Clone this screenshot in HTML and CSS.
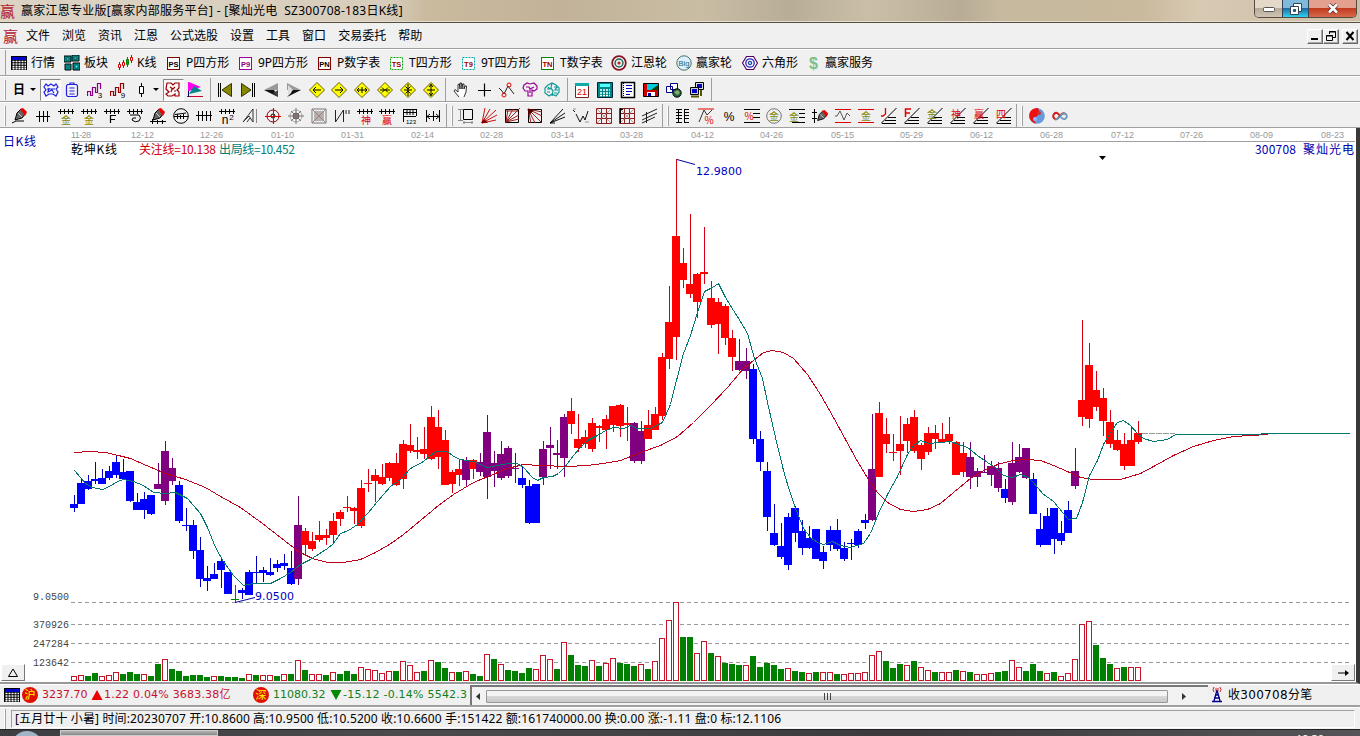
FILE: index.html
```html
<!DOCTYPE html>
<html lang="zh-CN">
<head>
  <meta charset="UTF-8" />
  <title>赢家江恩专业版</title>
  <link rel="stylesheet" href="styles.css">
</head>
<body>
  <!-- shared icon parts -->
  <svg class="defs">
    <symbol id="comb" viewBox="0 0 16 16"><path d="M0 3.5H16M2.5 1V6M6.5 1V6M10.5 1V6M14.5 1V6" stroke="#000" fill="none"/></symbol>
    <symbol id="fan" viewBox="0 0 16 16"><path d="M0 15.5L15.500 0M1 15.500H15M4 12.500H15M7 9.500H15" stroke="#000" fill="none"/></symbol>
    <symbol id="diamond" viewBox="0 0 16 16"><path d="M8 .5L15.500 8L8 15.500L.5 8Z" fill="#ff0" stroke="#665c00"/></symbol>
    <symbol id="grid" viewBox="0 0 16 16"><path d="M.5 .5H15.500V15.500H.5ZM.5 5.500H15.500M.5 10.500H15.500M5.500 .5V15.500M10.500 .5V15.500" fill="none" stroke="#822"/><path d="M1 15L15 1M1 1L15 15" stroke="#a77" stroke-width=".7"/></symbol>
    <symbol id="sheet" viewBox="0 0 16 14"><path d="M0 0H16V14H0Z" fill="#000"/><path d="M1 1H15V4H1Z" fill="#00c"/><path d="M1.500 5.500H15M1.500 8H15M1.500 10.500H15M1.500 12.700H15" stroke="#fff" stroke-width="1.700" stroke-dasharray="2 1"/></symbol>
    <symbol id="pencil" viewBox="0 0 16 16"><path d="M3 12L5 5L9 1L14 5L10 10Z" fill="#666" stroke="#000"/><path d="M8 1L11 0L15 4L13 8Z" fill="#e00"/><path d="M6 5L10 9" stroke="#ccc"/></symbol>
    <symbol id="wave" viewBox="0 0 16 16"><path d="M.5 14V9.500H3.500V13.500H5.500V5.500H8.500V10.500H10.500V1.500H13.500V7" fill="none" stroke-width="1.200"/></symbol>
  </svg>

  <header class="title-bar">
    <span class="logo">赢</span>
    <span class="title-text">赢家江恩专业版[赢家内部服务平台] - [聚灿光电&nbsp; SZ300708-183日K线]</span>
    <div class="window-buttons">
      <span class="win-min"><svg width="12" height="6"><rect x=".5" y=".5" width="11" height="4" rx="1" fill="#fff" stroke="#555"/></svg></span>
      <span class="win-max"><svg width="12" height="12"><path d="M3.500 .5H11.500V8.500H3.500Z" fill="#fff" stroke="#345"/><path d="M.5 3.500H8.500V11.500H.5Z" fill="#fff" stroke="#345"/><path d="M3.500 6.500H5.500V8.500H3.500Z" fill="#27a" stroke="#345"/></svg></span>
      <span class="win-close"><svg width="12" height="11"><path d="M2 1.500L10 9.500M10 1.500L2 9.500" stroke="#533" stroke-width="4"/><path d="M2 1.500L10 9.500M10 1.500L2 9.500" stroke="#fff" stroke-width="2.500"/></svg></span>
    </div>
  </header>

  <nav class="menu-bar">
    <span class="logo">赢</span>
    <div class="menu">
      <span>文件</span><span>浏览</span><span>资讯</span><span>江恩</span><span>公式选股</span><span>设置</span><span>工具</span><span>窗口</span><span>交易委托</span><span>帮助</span>
    </div>
    <div class="mdi-buttons">
      <span><svg width="12" height="10"><path d="M2 8H9" stroke="#000" stroke-width="2"/></svg></span>
      <span><svg width="12" height="10"><path d="M4.500 3V.5H10.500V6.500H8M4 1H11M1.500 4.500H7.500V9.500H1.500ZM1 5H8" fill="none" stroke="#000"/></svg></span>
      <span class="mdi-close"><svg width="12" height="10"><path d="M2.500 1L9.500 9M9.500 1L2.500 9" stroke="#000" stroke-width="2"/></svg></span>
    </div>
  </nav>

  <div class="toolbar named-tools">
    <div class="tool"><svg class="w16" height="14"><use href="#sheet" width="16" height="14"/></svg>行情</div>
    <div class="tool"><svg class="w16" viewBox="0 0 16 16"><path d="M0 1H7V7H0ZM8 0H15V6H8ZM1 9H7V15H1ZM9 8H16V15H9Z" fill="#099" stroke="#000"/><path d="M2 3H5V5H2ZM10 2H13V4H10ZM3 11H5V13H3ZM11 10H14V13H11Z" fill="#5ff" stroke="#055"/></svg>板块</div>
    <div class="tool"><svg class="w16" viewBox="0 0 16 16"><path d="M2.500 7V15M6.500 5V13M14.500 0V8" stroke="#d00"/><path d="M10.500 2V12" stroke="#080"/><path d="M1.500 9.500H3.500V12.500H1.500ZM5.500 7.500H7.500V10.500H5.500ZM13.500 2.500H15.500V5.500H13.500Z" fill="#fff" stroke="#d00"/><path d="M9.500 4.500H11.500V9.500H9.500Z" fill="#0a0" stroke="#080"/></svg>K线</div>
    <div class="tool"><svg class="w13" viewBox="0 0 13 13"><rect x=".5" y=".5" width="12" height="12" fill="#fff" stroke="#800000"/><text x="6.500" y="9.500">PS</text></svg>P四方形</div>
    <div class="tool"><svg class="w13 violet" viewBox="0 0 13 13"><rect x=".5" y=".5" width="12" height="12" fill="#fff" stroke="#a000a0"/><text x="6.500" y="9.500">P9</text></svg>9P四方形</div>
    <div class="tool"><svg class="w13" viewBox="0 0 13 13"><rect x=".5" y=".5" width="12" height="12" fill="#fff" stroke="#800000"/><text x="6.500" y="9.500">PN</text></svg>P数字表</div>
    <div class="tool"><svg class="w13 maroon" viewBox="0 0 13 13"><rect x=".5" y=".5" width="12" height="12" fill="#fff" stroke="#0a0" stroke-dasharray="2 1"/><text x="6.500" y="9.500">TS</text></svg>T四方形</div>
    <div class="tool"><svg class="w13 maroon" viewBox="0 0 13 13"><rect x=".5" y=".5" width="12" height="12" fill="#fff" stroke="#0aa" stroke-dasharray="2 1"/><text x="6.500" y="9.500">T9</text></svg>9T四方形</div>
    <div class="tool"><svg class="w13 maroon" viewBox="0 0 13 13"><rect x=".5" y=".5" width="12" height="12" fill="#fff" stroke="#080"/><text x="6.500" y="9.500">TN</text></svg>T数字表</div>
    <div class="tool"><svg class="w16" viewBox="0 0 16 16"><circle cx="8" cy="8" r="6.800" fill="#fff" stroke="#812" stroke-width="1.800"/><circle cx="8" cy="8" r="4" fill="#dee" stroke="#265" stroke-width="1.500"/><circle cx="8" cy="8" r="1.600" fill="#c22"/></svg>江恩轮</div>
    <div class="tool"><svg class="w16 big" viewBox="0 0 16 16"><circle cx="8" cy="8" r="7.200" fill="#def" stroke="#476"/><text x="8" y="11" textLength="11" lengthAdjust="spacingAndGlyphs">Big</text></svg>赢家轮</div>
    <div class="tool"><svg class="w16" viewBox="0 0 16 16"><path d="M4.500 1.500H11.500L15.500 8L11.500 14.500H4.500L.5 8Z" fill="#fff" stroke="#505" stroke-width="1.200"/><circle cx="8" cy="8" r="4.200" fill="#fff" stroke="#22c" stroke-width="1.300"/><circle cx="8" cy="8" r="1.800" fill="#9cf" stroke="#137"/></svg>六角形</div>
    <div class="tool"><svg class="w13 dollar" viewBox="0 0 13 18"><text x="6.500" y="14.500">$</text></svg>赢家服务</div>
  </div>

  <div class="toolbar view-tools">
    <i class="grip"></i>
    <span class="day">日<svg width="7" height="4"><path d="M1 0H7L4 3Z"/></svg></span>
    <span class="btn on"><svg viewBox="0 0 16 16" fill="none" stroke="#22d" stroke-width="1.200"><path d="M1 5L3 2L5 4L8 2L11 4L13 2L15 5L13 7L15 10L13 14L10 12H6L3 14L1 10L3 8Z"/><path d="M4 7H12M6 6L5 10L9 8L11 11"/></svg></span>
    <span class="btn"><svg viewBox="0 0 16 16" fill="none" stroke="#22d" stroke-width="1.200"><path d="M3.500 2.500H12.500L13.500 4V13L12.500 14.500H3.500L2.500 13V4ZM6 2V1H10V3M5.500 6H10.500M5.500 9H10.500M5.500 12H10.500"/></svg></span>
    <span class="btn"><svg viewBox="0 0 16 16" stroke="#808"><use href="#wave"/><text x="13" y="16" class="sub">3</text></svg></span>
    <span class="btn"><svg viewBox="0 0 16 16" stroke="#900"><use href="#wave"/><text x="13" y="16" class="sub">9</text></svg></span>
    <span class="day candle"><svg width="6" height="14"><path d="M3.500 0V14" stroke="#000"/><path d="M1.500 3.500H5.500V10.500H1.500Z" fill="#fff" stroke="#000"/></svg><svg width="7" height="4"><path d="M1 0H7L4 3Z"/></svg></span>
    <span class="btn on"><svg viewBox="0 0 16 16" fill="none" stroke="#900" stroke-width="1.200"><path d="M2 1H6L8 3L10 1H14V6L12 8L14 10V14H10V12L7 14H3L1 12L4 10L1 7Z"/><path d="M5 5L8 7L10 5M7 7L6 10M9 9L11 9"/></svg></span>
    <span class="btn"><svg viewBox="0 0 16 16"><path d="M2 0L14 5L2 9Z" fill="#f0e"/><path d="M2 12L7 4L15 9Z" fill="#088"/><path d="M1.500 0V15" stroke="#f0e"/><path d="M0 14.500H16" stroke="#c03"/><path d="M1.500 9V15" stroke="#006"/></svg></span>
    <i class="sep"></i>
    <span class="btn"><svg viewBox="0 0 16 16"><path d="M1.500 1V15M3.500 1V15" stroke="#000"/><path d="M14.500 1.500V14.500L5 8Z" fill="#880" stroke="#330"/></svg></span>
    <span class="btn"><svg viewBox="0 0 16 16"><path d="M14.500 1V15M12.500 1V15" stroke="#000"/><path d="M1.500 1.500V14.500L11 8Z" fill="#880" stroke="#330"/></svg></span>
    <span class="btn"><svg viewBox="0 0 16 16"><path d="M15 1V8H1Z" fill="#999"/><path d="M15 15L11 8H1Z" fill="#111"/><path d="M15 8V15L10 11Z" fill="#444"/></svg></span>
    <span class="btn"><svg viewBox="0 0 16 16"><path d="M1 1L15 8H1Z" fill="#999"/><path d="M1 15L5 11L6 8H15Z" fill="#111"/><path d="M2 3L7 8L2 13Z" fill="#ddd"/></svg></span>
    <span class="btn"><svg viewBox="0 0 16 16"><use href="#diamond"/><path d="M4 8H12M7 5L4 8L7 11" fill="none" stroke="#000"/></svg></span>
    <span class="btn"><svg viewBox="0 0 16 16"><use href="#diamond"/><path d="M4 8H12M9 5L12 8L9 11" fill="none" stroke="#000"/></svg></span>
    <span class="btn"><svg viewBox="0 0 16 16"><use href="#diamond"/><path d="M3 8H13M5 6L3 8L5 10M11 6L13 8L11 10M8 5V11" fill="none" stroke="#000"/></svg></span>
    <span class="btn"><svg viewBox="0 0 16 16"><use href="#diamond"/><path d="M3 8H13M5 5.500L7.500 8L5 10.500M11 5.500L8.500 8L11 10.500" fill="none" stroke="#000"/></svg></span>
    <span class="btn"><svg viewBox="0 0 16 16"><use href="#diamond"/><path d="M8 2V14M4 8H12M5.500 4.500L8 7L10.500 4.500M5.500 11.500L8 9L10.500 11.500" fill="none" stroke="#000"/></svg></span>
    <span class="btn"><svg viewBox="0 0 16 16"><use href="#diamond"/><path d="M8 2V14M4 8H12M6 5L8 2.500L10 5M6 11L8 13.500L10 11" fill="none" stroke="#000"/></svg></span>
    <i class="sep"></i>
    <span class="btn"><svg viewBox="0 0 16 16"><path d="M6 15L1 9L2 7.500L5 10V2.500L6.500 2L7 7V1L8.500 1L9 7L9.500 2H11V7L12 4H13.500L13 10L11 15" fill="#fff" stroke="#000" stroke-width=".8"/></svg></span>
    <span class="btn"><svg viewBox="0 0 16 16"><path d="M8.500 1.500V14.500M2 8.500H15" stroke="#000" stroke-width="1.200"/></svg></span>
    <span class="btn"><svg viewBox="0 0 16 16" fill="none"><path d="M0 6L3 9L5 12L9 4L15 12" stroke="#222"/><circle cx="5" cy="13" r="2" stroke="#d00"/><circle cx="10" cy="3" r="2" stroke="#d00"/></svg></span>
    <span class="btn"><svg viewBox="0 0 16 16" fill="none" stroke="#909" stroke-width="1.200"><path d="M2 3L5 1L8 2L12 1L15 4V7L12 9L10 8V14H6V9L3 9L1 6Z"/><path d="M4 5H7L8 7L12 5M8 7V11"/></svg></span>
    <span class="btn"><svg viewBox="0 0 16 16" fill="none" stroke="#199" stroke-width="1.200"><path d="M4 3L8 1L12 3L15 6V10L12 14L8 12L5 14L1 11V6ZM8 1L7 6L9 9L8 14M4 5L6 7H3M10 5H13L11 8H14M3 10H6M10 11H13"/></svg></span>
    <i class="sep"></i>
    <span class="btn"><svg viewBox="0 0 16 16"><path d="M1.500 1.500H14.500V15.500H1.500Z" fill="#fff" stroke="#722"/><path d="M1 1H15V4H1Z" fill="#1aa"/><text x="8" y="13" class="cal">21</text></svg></span>
    <span class="btn"><svg viewBox="0 0 16 16"><path d="M.5 .5H15.500V15.500H.5Z" fill="#088" stroke="#023"/><path d="M3 2H13V5H3Z" fill="#5ff"/><path d="M3 8H13M3 11H13M3 13.500H13" stroke="#fff" stroke-width="1.600" stroke-dasharray="2 1"/></svg></span>
    <span class="btn"><svg viewBox="0 0 16 16"><path d="M1.500 .5H14.500V15.500H1.500Z" fill="#fff" stroke="#000" stroke-width="1.500"/><path d="M3.500 1V15" stroke="#000" stroke-dasharray="1 1"/><path d="M6 3.500H12M6 6.500H12M6 9.500H12M6 12.500H10" stroke="#00a"/></svg></span>
    <span class="btn"><svg viewBox="0 0 16 16"><path d="M.5 1.500H15.500V14.500H.5Z" fill="#c00" stroke="#000"/><path d="M4 2H15V8H4Z" fill="#0cd"/><path d="M8 8L15 3V8Z" fill="#040"/><path d="M4 10H12V14H4Z" fill="#fff"/><path d="M5 11H8V14H5Z" fill="#00a"/></svg></span>
    <span class="btn"><svg viewBox="0 0 16 16"><path d="M4.500 1.500H11.500V7.500H4.500ZM.5 4.500H6.500V10.500H.5Z" fill="#fff" stroke="#008"/><circle cx="11" cy="11" r="4.200" fill="#264" stroke="#000"/><path d="M8 10L12 8L14 11L11 13Z" fill="#8a6"/></svg></span>
    <span class="btn"><svg viewBox="0 0 16 16"><path d="M6.500 .5H14.500V7.500H6.500Z" fill="#ddd" stroke="#000"/><path d="M8 2H13V6H8Z" fill="#00b"/><path d="M1.500 5.500H9.500V12.500H1.500Z" fill="#ccc" stroke="#000"/><path d="M3 7H8V11H3Z" fill="#00c"/><path d="M2 14.500H10M12 8V14" stroke="#550" stroke-width="2"/></svg></span>
    <i class="sep"></i>
  </div>

  <div class="toolbar draw-tools">
    <i class="grip"></i>
    <span class="btn"><svg viewBox="0 0 16 16"><use href="#pencil"/><path d="M0 15L4 13H12" fill="none" stroke="#000"/></svg></span>
    <span class="btn"><svg viewBox="0 0 16 16"><path d="M1 8.500H15M4.500 3V14M8.500 3V14M12.500 3V14" stroke="#000"/></svg></span>
    <span class="btn"><svg viewBox="0 0 16 16"><use href="#comb"/><text x="8" y="15.500" class="gold">金</text></svg></span>
    <span class="btn"><svg viewBox="0 0 16 16"><use href="#comb"/><text x="8" y="15.500" class="gold">金</text></svg></span>
    <span class="btn"><svg viewBox="0 0 16 16"><use href="#comb"/><path d="M6.500 15V7.500H12M6.500 11.500H11" fill="none" stroke="#000" stroke-width="1.200"/></svg></span>
    <span class="btn"><svg viewBox="0 0 16 16"><use href="#comb"/><path d="M3 7H12Q15 10 12 13Q8 15 5 12Q5 9 9 10" fill="none" stroke="#000"/></svg></span>
    <span class="btn"><svg viewBox="0 0 16 16"><use href="#pencil"/><path d="M0 13.500H16M2.500 11V16M7.500 12V16M12.500 12V16" stroke="#000"/></svg></span>
    <span class="btn"><svg viewBox="0 0 16 16"><circle cx="8" cy="8" r="7.300" fill="none" stroke="#000"/><path d="M1 8.500H15M4.500 6V11M7.500 7V11M10.500 6V11M2 6.500L13 5" stroke="#000"/></svg></span>
    <span class="btn"><svg viewBox="0 0 16 16"><path d="M0 7.500H16M2.500 3V13M6.500 3V13M10.500 3V13M14.500 3V13" stroke="#000"/></svg></span>
    <span class="btn"><svg viewBox="0 0 16 16"><use href="#comb"/><text x="6" y="15.500" class="ink">n</text><text x="12.500" y="12" class="sub">2</text></svg></span>
    <span class="btn"><svg viewBox="0 0 16 16"><path d="M1 14L11 1V14L7 8L1 14M5 14L8 10" fill="none" stroke="#333"/><path d="M14.500 1V15" stroke="#888"/></svg></span>
    <span class="btn"><svg viewBox="0 0 16 16"><circle cx="8" cy="8" r="6" fill="none" stroke="#800"/><circle cx="8" cy="8" r="2" fill="none" stroke="#000"/><path d="M8.500 0V16M0 8.500H16" stroke="#d00"/></svg></span>
    <span class="btn"><svg viewBox="0 0 16 16"><circle cx="8" cy="8" r="6" fill="none" stroke="#aaa"/><circle cx="8" cy="8" r="3" fill="#a55" stroke="#666"/><path d="M8 0V16M0 8H16M3 3L13 13M13 3L3 13" stroke="#777"/></svg></span>
    <span class="btn"><svg viewBox="0 0 16 16"><path d="M1 1H15V15H1ZM4 4H12V12H4ZM6 6H10V10H6Z" fill="none" stroke="#777"/><path d="M1 1L15 15M15 1L1 15" stroke="#a77"/></svg></span>
    <span class="btn"><svg viewBox="0 0 16 16"><path d="M1.500 2V14L9.500 2V14M12 2V6M15 2V6" fill="none" stroke="#222"/></svg></span>
    <span class="btn"><svg viewBox="0 0 16 16"><use href="#comb"/><text x="9" y="15.500" class="crimson">神</text></svg></span>
    <span class="btn"><svg viewBox="0 0 16 16"><use href="#comb"/><text x="8" y="15.500" class="crimson">赢</text></svg></span>
    <span class="btn"><svg viewBox="0 0 16 16"><path d="M1.500 1V14M1 1.500H15M14.500 1V8M1 4.500H14M5 1V7M8 1V7M11 1V7M1 8.500H14" stroke="#000"/><text x="9" y="15.500" class="tiny">123</text></svg></span>
    <span class="btn"><svg viewBox="0 0 16 16"><path d="M1.500 2V14M14.500 2V14M8.500 3V13M2 8.500H14M5 6L2 8.500L5 11M11 6L14 8.500L11 11" fill="none" stroke="#000"/></svg></span>
    <i class="sep"></i><i class="grip"></i>
    <span class="btn"><svg viewBox="0 0 16 16"><path d="M5.500 1.500H14.500V11.500H5.500Z" fill="none" stroke="#000"/><path d="M2.500 1V13M0 1.500H5M0 12.500H5M5 14.500H15M6 13V16M14 13V16" stroke="#888"/></svg></span>
    <span class="btn"><svg viewBox="0 0 16 16"><path d="M1 15L4 0M1 15L9 1M1 15L15 2M1 15L16 7M1 15L15 12" stroke="#c11"/><path d="M0 15H7L3 11Z" fill="#700"/></svg></span>
    <span class="btn"><svg viewBox="0 0 16 16"><path d="M1.500 1.500H14.500V14.500H1.500Z" fill="none" stroke="#000"/><path d="M2 14L4 1M2 14L9 1M2 14L16 0M2 14L15 7M2 14L15 11M2 3L14 3" stroke="#922"/></svg></span>
    <span class="btn"><svg viewBox="0 0 16 16"><path d="M1.500 1.500H14.500V14.500H1.500Z" fill="none" stroke="#000"/><path d="M1 1L15 4M1 1L15 8M1 1L15 15M1 1L8 15M1 1L4 15" stroke="#922"/><path d="M1 1H8L1 8Z" fill="#500"/></svg></span>
    <span class="btn"><svg viewBox="0 0 16 16"><path d="M0 15L13 1M0 15L15 5M0 15L15 9M0 15H5" stroke="#111"/></svg></span>
    <span class="btn"><svg viewBox="0 0 16 16"><path d="M0 2L2 4M3 6L7 14L10 8L12 12L15 3" fill="none" stroke="#111"/><path d="M0 1H3M12 14H16" stroke="#999"/></svg></span>
    <span class="btn"><svg viewBox="0 0 16 16"><use href="#grid"/></svg></span>
    <span class="btn"><svg viewBox="0 0 16 16"><use href="#grid"/><path d="M1.500 0V15M1 1.500H4" stroke="#000"/></svg></span>
    <span class="btn"><svg viewBox="0 0 16 16"><path d="M0 8L15 1M0 12L15 5M0 15L13 9M4.500 4V15" stroke="#222"/></svg></span>
    <i class="sep"></i><i class="grip"></i>
    <span class="btn"><svg viewBox="0 0 16 16"><path d="M3.500 1V15M9.500 1V15" stroke="#000"/><path d="M1 1.500H7M1 4.500H7M1 7.500H7M1 10.500H7M1 14.500H7M9 1.500H14M9 4.500H14M9 7.500H14M9 10.500H14M9 14.500H14" stroke="#000"/></svg></span>
    <span class="btn"><svg viewBox="0 0 16 16"><path d="M0 1H16" stroke="#d00"/><path d="M1 14L6 2L9 7L14 2" fill="none" stroke="#333"/><text x="11" y="15.500" class="crimson">%</text></svg></span>
    <span class="btn"><svg viewBox="0 0 16 16"><text x="8" y="13" class="ink">%</text></svg></span>
    <span class="btn"><svg viewBox="0 0 16 16"><path d="M0 1.500H16M9 5.500H16M9 9.500H16M0 14.500H16" stroke="#000"/><text x="5" y="12" class="crimson">%</text></svg></span>
    <span class="btn"><svg viewBox="0 0 16 16"><circle cx="8" cy="8" r="7.300" fill="none" stroke="#777"/><text x="8" y="12" class="gold">金</text></svg></span>
    <span class="btn"><svg viewBox="0 0 16 16"><path d="M0 1.500H16M10 5.500H16M10 9.500H16M3 14.500H16" stroke="#000"/><text x="5" y="13" class="gold">金</text></svg></span>
    <span class="btn"><svg viewBox="0 0 16 16"><use href="#pencil" x="3" y="2" width="14" height="14"/><path d="M2.500 1V15M0 4.500H5M0 10.500H5" stroke="#000"/></svg></span>
    <span class="btn"><svg viewBox="0 0 16 16"><path d="M0 1.500H16M0 14.500H16" stroke="#d00"/><path d="M0 8H2L5 3L9 12L12 5L15 8" fill="none" stroke="#555"/></svg></span>
    <span class="btn"><svg viewBox="0 0 16 16"><path d="M0 1.500H16M0 14.500H16" stroke="#d00"/><text x="8" y="12" class="gold">金</text></svg></span>
    <span class="btn"><svg viewBox="0 0 16 16"><use href="#fan"/><path d="M4.500 0V6L2 8H0" fill="none" stroke="#d00" stroke-width="1.300"/></svg></span>
    <span class="btn"><svg viewBox="0 0 16 16"><use href="#fan"/><path d="M1.500 9V1H7M1.500 5H6" fill="none" stroke="#d00" stroke-width="1.500"/></svg></span>
    <span class="btn"><svg viewBox="0 0 16 16"><use href="#fan"/><text x="5" y="10" class="gold">金</text></svg></span>
    <span class="btn"><svg viewBox="0 0 16 16"><use href="#fan"/><text x="6" y="10" class="crimson">神</text></svg></span>
    <span class="btn"><svg viewBox="0 0 16 16"><use href="#fan"/><text x="6" y="10" class="crimson">赢</text></svg></span>
    <span class="btn"><svg viewBox="0 0 16 16"><use href="#fan"/><text x="5" y="9.500" class="crimson">四</text></svg></span>
    <i class="sep"></i><i class="grip"></i>
    <span class="btn"><svg viewBox="0 0 16 16"><circle cx="8" cy="8" r="7.800" fill="#69d"/><path d="M9 0A7.800 7.800 0 1 0 7 15.500Q3 11 8 8Q12 5 9 0Z" fill="#e11"/><circle cx="10" cy="5" r="2" fill="#c33"/><circle cx="6" cy="11" r="2" fill="#8bf"/></svg></span>
    <span class="btn"><svg viewBox="0 0 16 16"><path d="M8 8Q5 3 2 6Q0 9 3 11Q5 12 8 8Q11 4 13 6" fill="none" stroke="#c22" stroke-width="2"/><path d="M8 8Q11 4 14 6Q16 9 13 11Q11 12 8 8M3 11Q5 12 7 9" fill="none" stroke="#69b" stroke-width="1.800"/></svg></span>
  </div>

  <main class="workspace">
    <svg id="chart" width="1355" height="554" viewBox="0 128 1355 554">
      <g id="dates" class="dates"></g>
      <path class="axis" d="M71 141.500H1355"/>
      <g class="guides"><path d="M71 602.500H1352M71 624.500H1352M71 643.500H1352M71 662.500H1352"/></g>
      <g id="volume"></g>
      <g id="candles"></g>
      <g id="averages" class="averages"></g>
      <path class="last-close" d="M1142 433.500H1175"/>
      <path class="pointer" d="M677 159.500L695 164.500M235 602.500L255 597.500"/>
      <path d="M1099 156H1106L1102.500 160Z"/>
      <text class="song blue" x="3" y="146" textLength="33">日K线</text>
      <text class="song" x="71" y="154" textLength="46">乾坤K线</text>
      <text class="song red" x="139" y="154" textLength="77">关注线=10.138</text>
      <text class="song teal" x="219" y="154" textLength="76">出局线=10.452</text>
      <text class="song blue" x="1255" y="154" textLength="41">300708</text>
      <text class="song blue" x="1303" y="154" textLength="51">聚灿光电</text>
      <text class="mark" x="696" y="175" textLength="46">12.9800</text>
      <text class="mark" x="255" y="600" textLength="39">9.0500</text>
      <g class="scale">
        <text x="33" y="600">9.0500</text>
        <text x="33" y="628">370926</text>
        <text x="33" y="647">247284</text>
        <text x="33" y="666">123642</text>
      </g>
    </svg>
    <span class="corner corner-left"><svg width="12" height="10"><path d="M6 1L10.500 8.500H1.500Z" fill="none" stroke="#000"/></svg></span>
    <span class="corner corner-right"><svg width="12" height="8"><path d="M1 4H9" stroke="#000"/><path d="M8 1L12 4L8 7Z"/></svg></span>
  </main>

  <div class="index-bar">
    <div class="indexes">
      <svg class="w16" height="14"><use href="#sheet" width="16" height="14"/></svg>
      <b class="coin">沪</b>
      <span class="up sh">3237.70</span>
      <svg width="12" height="10"><path d="M6 0L11.500 10H.5Z" fill="#e00"/></svg>
      <span class="up sh2">1.22 0.04% 3683.38亿</span>
      <b class="coin">深</b>
      <span class="down sz">11080.32</span>
      <svg width="12" height="10"><path d="M6 10L11.500 0H.5Z" fill="#080"/></svg>
      <span class="down sz2">-15.12 -0.14% 5542.3</span>
    </div>
    <div class="scroll">
      <svg width="4" height="7"><path d="M4 0V7L0 3.500Z" fill="#333"/></svg>
      <span class="thumb"><i></i><i></i><i></i></span>
      <svg width="4" height="7"><path d="M0 0V7L4 3.500Z" fill="#333"/></svg>
    </div>
    <div class="feed">
      <svg width="12" height="16" viewBox="0 0 12 16"><path d="M6 3L3 14M6 3L9 14M4 8H8M3 11H9M1 14.500H11" stroke="#008" stroke-width="1.300"/><path d="M3 0Q1 3 3 5M9 0Q11 3 9 5M5 1V4M7 1V4" stroke="#c22" fill="none"/></svg>
      <span>收300708分笔</span>
    </div>
  </div>

  <footer class="status-bar">
    <i class="grip"></i>
    <div class="status">[五月廿十 小暑] 时间:20230707 开:10.8600 高:10.9500 低:10.5200 收:10.6600 手:151422 额:161740000.00 换:0.00 涨:-1.11 盘:0 标:12.1106</div>
  </footer>

  <div class="taskbar"><span class="orb"></span><span class="task"></span><span class="clock">19:30</span></div>

  <script src="chart.js"></script>
</body>
</html>
```
FILE: styles.css
```css
* {
  box-sizing: border-box;
}
body {
  margin: 0;
  width: 1360px;
  height: 736px;
  overflow: hidden;
  display: flex;
  flex-direction: column;
  font: 12px/16px "Noto Sans", "Noto Sans CJK SC", sans-serif;
  color: #000;
  background: #f0f0f0;
}
body > * {
  flex: none;
}
svg {
  display: block;
  flex: none;
}
.defs {
  display: none;
}
svg text {
  text-anchor: middle;
  stroke: none;
}

/* title bar and menu */
.title-bar {
  display: flex;
  align-items: flex-start;
  height: 23px;
  border-bottom: 1px solid #57503f;
  box-shadow: inset 0 -1px #e4ddd0;
  background: linear-gradient(90deg, #ddd3c4 0, #d8cdbc 390px, #cabb9f 425px, #c1b299 560px, #c9bda4 700px, #b8ad97 790px, #cabfa6 870px, #b8ac96 960px, #c6b99f 1000px, #c9b99d 1140px, #d8c9b2 1200px, #cbbda6 1360px);
}
.logo {
  width: 16px;
  margin: 3px 5px 0 0;
  font: 15px/16px "Noto Sans CJK SC", sans-serif;
  color: #b01830;
}
.title-text {
  margin-top: 3px;
  letter-spacing: 0.26px;
}
.window-buttons {
  display: flex;
  width: 103px;
  height: 18px;
  margin-left: auto;
  margin-right: 3px;
  border: 1px solid #544a40;
  border-top: 0;
  border-radius: 0 0 5px 5px;
  overflow: hidden;
}
.window-buttons span {
  display: flex;
  align-items: center;
  justify-content: center;
}
.win-min {
  width: 27px;
  padding-top: 3px;
  background: linear-gradient(#e4d9c8 50%, #b6aa98 50%, #cfc4b3);
}
.win-max {
  width: 27px;
  border: solid #345;
  border-width: 0 1px;
  background: linear-gradient(#7fb9dc 45%, #1f6ca4 50%, #2fd3ee);
}
.win-close {
  flex: 1;
  background: linear-gradient(#e3a08e 45%, #c23c20 50%, #d8694a);
}
.menu-bar {
  display: flex;
  align-items: center;
  height: 26px;
  padding: 1px 0 0 3px;
  border-bottom: 1px solid #a0a0a0;
}
.menu-bar .logo {
  margin: 0 7px 0 0;
}
.menu {
  display: flex;
  gap: 12px;
}
.mdi-buttons {
  display: flex;
  margin-left: auto;
  margin-right: 2px;
}
.mdi-buttons span {
  display: flex;
  align-items: center;
  justify-content: center;
  width: 16px;
  height: 15px;
  border: 1px solid;
  border-color: #fff #696969 #696969 #fff;
  box-shadow: inset -1px -1px #a8a8a8;
}
.mdi-buttons .mdi-close {
  margin-left: 3px;
}

/* toolbars */
.toolbar {
  display: flex;
  align-items: center;
  height: 26px;
  padding: 1px 0 0 4px;
  border-top: 1px solid #fff;
  border-bottom: 1px solid #a0a0a0;
}
.toolbar.named-tools {
  display: grid;
  grid-template-columns: 53px 53px 50px 72px 79px 72px 72px 79px 70px 65px 66px 65px 90px;
  height: 27px;
  padding-left: 11px;
  box-shadow: inset 5px 0 #f0f0f0, inset 6px 0 #a0a0a0;
}
.tool {
  display: flex;
  align-items: center;
  gap: 4px;
  white-space: nowrap;
}
.w16 {
  width: 16px;
}
.tool .w16 {
  max-height: 16px;
}
.w13 {
  width: 13px;
  height: 13px;
  margin-right: 2px;
}
.w13 text {
  font: bold 7.500px "Liberation Sans", sans-serif;
}
.violet text {
  fill: #808;
}
.maroon text {
  fill: #900;
}
.big text {
  font: 8px "Liberation Sans", sans-serif;
  fill: #266;
}
.tool .dollar {
  height: 18px;
  margin-right: 1px;
}
.dollar text {
  font: bold 16px "Liberation Sans", sans-serif;
  fill: #7cc088;
}
.grip {
  width: 2px;
  height: 20px;
  margin-right: 3px;
  border-left: 1px solid #fff;
  border-right: 1px solid #a0a0a0;
}
.sep {
  width: 1px;
  height: 24px;
  margin: 0 3px;
  background: #a0a0a0;
}
.btn {
  display: flex;
  align-items: center;
  justify-content: center;
  width: 22.900px;
  height: 22px;
}
.btn svg {
  width: 16px;
  height: 16px;
  overflow: visible;
}
.btn.on {
  width: 21px;
  border: 1px solid;
  border-color: #888 #fff #fff #888;
  background: #f8f8f8;
}
.day {
  display: flex;
  align-items: center;
  gap: 4px;
  width: 31px;
  padding-left: 4px;
  font-weight: bold;
}
.candle {
  width: 33px;
  padding-left: 8px;
  gap: 8px;
}
.draw-tools .btn {
  width: 22.950px;
}
.draw-tools .sep {
  margin: 0 4px 0 1px;
}
.draw-tools .grip {
  margin-right: 2px;
}
.draw-tools > .grip:first-child {
  margin-right: 3px;
}
.gold {
  font: 10px "Noto Sans CJK SC", sans-serif;
  fill: #880;
}
.crimson {
  font: 10px "Noto Sans CJK SC", sans-serif;
  fill: #d00;
}
.ink {
  font: 12px "Liberation Sans", sans-serif;
}
.sub {
  font: 8px "Liberation Sans", sans-serif;
}
.cal {
  font: 9px "Liberation Sans", sans-serif;
  fill: #d00;
}
.tiny {
  font: 6px "Liberation Sans", sans-serif;
}

/* chart */
.workspace {
  position: relative;
  height: 556px;
  border-right: 4px solid #3b3838;
  border-bottom: 2px solid #999;
  background: #fff;
}
#chart text {
  text-anchor: start;
}
#chart .dates text {
  font: 9px "Liberation Sans", sans-serif;
  fill: #999;
}
.axis {
  stroke: #a0a0a0;
}
.guides path {
  fill: none;
  stroke: #999;
  stroke-dasharray: 4 3;
}
.averages path {
  fill: none;
  shape-rendering: crispEdges;
}
#candles, #volume {
  shape-rendering: crispEdges;
}
.last-close {
  stroke: #999;
  stroke-dasharray: 6 1;
}
.pointer {
  fill: none;
  stroke: #0000a0;
}
.song {
  font: 12px "Noto Sans CJK SC", sans-serif;
}
.blue {
  fill: #0000b0;
}
.red {
  fill: #d00010;
}
.teal {
  fill: #008078;
}
.mark {
  font: 11px "DejaVu Sans", sans-serif;
  fill: #0000c0;
}
.scale text {
  font: 10px "Liberation Mono", monospace;
  fill: #444;
}
.corner {
  position: absolute;
  bottom: 1px;
  display: flex;
  align-items: center;
  justify-content: center;
  width: 24px;
  height: 17px;
  background: #f0f0f0;
  border: 1px solid;
  border-color: #fff #777 #777 #fff;
}
.corner-left {
  left: 1px;
}
.corner-right {
  right: 1px;
}

/* bottom bars */
.index-bar {
  display: flex;
  height: 23px;
  border-top: 1px solid #fff;
  border-bottom: 2px solid #a0a0a0;
  font-family: "DejaVu Sans", "Noto Sans CJK SC", sans-serif;
  font-size: 11px;
}
.indexes {
  display: flex;
  align-items: center;
  width: 470px;
  padding-left: 4px;
  overflow: hidden;
  white-space: nowrap;
}
.coin {
  width: 16px;
  height: 16px;
  margin: 0 4px 0 2px;
  border-radius: 50%;
  background: #e01000;
  color: #ff0;
  font: 11px/15px "Noto Sans CJK SC", sans-serif;
  text-align: center;
}
.up {
  color: #c8102c;
}
.down {
  color: #108020;
}
.sh {
  width: 49px;
}
.sz {
  width: 56px;
}
.sh2 {
  width: 148px;
  padding-left: 1px;
  letter-spacing: 0.2px;
}
.sz {
  width: 57px;
}
.sz2 {
  padding-left: 1px;
  letter-spacing: 0.22px;
}
.scroll {
  display: flex;
  align-items: center;
  width: 738px;
  padding-left: 4px;
  border: solid #777;
  border-width: 2px 0 0 2px;
  background: #f2f2f2;
}
.thumb {
  display: flex;
  align-items: center;
  justify-content: center;
  gap: 2px;
  width: 682px;
  height: 13px;
  margin: 0 14px 0 6px;
  border: 1px solid #979797;
  border-radius: 1px;
  background: linear-gradient(#f4f4f4 45%, #d8d8d8 50%, #c8c8c8);
}
.thumb i {
  width: 1px;
  height: 7px;
  background: #444;
}
.feed {
  display: flex;
  align-items: center;
  gap: 5px;
  padding-left: 3px;
  font-size: 12px;
  letter-spacing: 0.3px;
}
.status-bar {
  display: flex;
  align-items: center;
  height: 22px;
  padding: 1px 5px 1px 4px;
  border-top: 1px solid #fff;
}
.status {
  flex: 1;
  height: 18px;
  margin-left: 2px;
  padding-left: 3px;
  border: 1px solid #a0a0a0;
  border-right-color: #fff;
  border-bottom-color: #fff;
  letter-spacing: 0.125px;
  white-space: nowrap;
}
.taskbar {
  display: flex;
  height: 7px;
  border-top: 1px solid #222;
  overflow: hidden;
  background: linear-gradient(90deg, #3c3e42, #4a4a4c 400px, #3c3a3c 900px, #555458);
}
.orb {
  width: 32px;
  height: 32px;
  margin: 1px 17px 0 11px;
  border-radius: 50%;
  background: #9fb4c4;
}
.task {
  width: 158px;
  background: linear-gradient(#b4b4b4, #888);
  border: 1px solid #ccc;
}
.clock {
  margin: 1px 36px 0 auto;
  color: #fff;
  font-size: 11px;
}
```
FILE: chart.js
```js
const NS = 'http://www.w3.org/2000/svg';
const STEP = 7;
const FIRST = 74;
const BASE = 681;

const fills = { b: '#0000ff', r: '#ff0000', p: '#800080', g: '#008000' };
const wicks = { b: '#0000c0', r: '#d80010', p: '#700070', g: '#008000' };

// colour high,top,bottom,low
const candles = `b495,504,508,512 b479,483,504,504 b475,481,489,490 b462,479,481,484 b469,478,484,484 b466,471,478,480 b455,462,475,478 b459,472,479,480
b471,471,501,502 b493,502,510,510 b492,499,510,519 b495,495,514,515 p463,484,489,489 p441,451,501,505 p458,468,481,485 b481,485,521,523
b508,525,526,531 b520,525,551,559 b537,550,579,587 b566,578,581,591 b563,574,579,579 b559,561,570,588 b572,572,594,594 g585,599,600,602
b588,590,593,599 b570,572,595,595 b556,572,573,583 b567,570,573,582 b558,572,575,576 b560,564,568,572 b554,563,566,570 b551,568,584,585
p496,525,579,585 r528,531,545,556 r532,541,549,551 r521,535,540,542 r529,535,538,545 r513,521,535,543 r510,512,519,526 r496,507,508,512
r507,508,511,524 r480,488,526,528 r469,483,484,492 r469,475,481,502 r464,477,484,485 r462,463,478,481 r453,463,485,486 r440,444,479,489
r424,445,451,453 r437,450,452,459 r427,449,454,459 r406,417,459,460 r410,427,457,469 r430,440,485,485 r470,472,484,493 r460,469,475,486
p457,460,480,486 r459,460,469,479 p453,462,472,476 p415,432,477,499 p451,463,471,487 p441,454,478,480 p446,448,476,478 p453,468,469,483
b466,478,485,488 b480,486,523,524 b484,484,523,523 p441,449,477,485 p427,445,448,469 p440,453,455,469 p414,417,458,477 r398,411,424,434
r414,439,448,452 r430,437,444,448 r418,423,449,452 r425,426,428,442 r415,419,430,449 r406,406,425,432 r404,405,426,437 r407,423,425,441
p422,423,461,463 p421,431,461,464 r410,425,439,439 r407,414,430,430 r353,357,416,420 r286,322,359,369 r159,236,337,360 r248,263,280,288
r214,284,294,298 r273,274,302,318 r227,272,274,284 r281,298,325,328 r298,302,324,354 r304,306,338,345 r330,338,357,371 p339,361,370,371
p348,361,371,379 b364,369,439,444 b431,439,462,471 b462,471,517,531 b504,533,545,546 b523,546,557,559 b513,517,565,570 b506,508,533,542
b520,531,548,555 b526,538,548,549 b529,529,559,559 b546,552,561,569 b526,530,545,551 b519,530,549,551 b542,548,559,561 b539,543,544,560
b529,531,545,548 b514,520,523,529 p414,469,520,521 r402,413,477,477 r418,434,444,453 r434,452,453,461 r416,444,451,475 r418,424,441,453
r410,417,451,453 r443,445,459,470 r427,433,452,455 r425,433,439,449 r423,439,442,443 r417,434,441,444 r441,442,475,475 r442,453,472,477
p442,457,477,489 p468,471,477,487 p455,472,473,473 p461,466,475,486 p462,468,488,492 b479,489,498,503 p442,463,502,505 p444,457,472,473
p448,448,478,479 b473,479,514,514 b513,529,545,547 b508,516,545,545 b508,508,539,554 b521,533,541,545 b501,510,533,533 p448,471,486,489
r320,400,417,426 r343,365,419,428 r371,390,407,411 r388,398,421,436 r410,422,444,448 r430,440,450,451 r433,444,466,470 r427,440,466,466
r421,433,442,444`.split(/\s+/);

// r = hollow, g = solid; the number is the top edge
const volumes = `r676 r675 g676 g673 r676 r675 r672 g674 g672 g674 r674 g676 g664 r659 g669 g671 g676 g675 g675 g677
r676 g676 g677 g677 g678 r674 g675 r675 r675 g676 r674 g674 r660 g670 r674 r674 g675 r672 g674 g671
g674 r667 r669 r670 r673 r671 g671 r661 r665 r672 g671 r660 g662 g668 r672 g672 r671 g674 g676 r654
g659 r664 g670 g671 g673 g668 r669 r655 r659 g669 r642 g655 g665 g666 r660 g666 r663 r658 g663 g664
g666 r664 g669 r661 r638 r620 r602 g637 g637 r653 r641 g653 r656 g663 g664 g665 r665 g656 g667 g663
g665 g669 r668 g671 g672 r673 g672 r672 r672 g674 r674 r673 r673 r672 r655 r651 g661 g668 g664 r665
g661 r667 r670 g672 r672 r672 g670 r671 g672 r674 r674 r673 g672 g671 r660 r667 g671 g664 g671 r673
g672 r676 r673 r659 r624 r621 g645 g658 g664 r668 g667 r667 r667`.split(/\s+/);

const slowLine = '74,452 90,451 105,452 118,455 130,458 146,465 165,473 185,479 205,487 220,496 240,507 262,523 280,537 298,551 312,558 327,562 343,562 360,559 375,552 389,544 403,534 420,520 438,505 453,494 473,482 490,475 507,468 523,464 540,465 567,466 587,465 603,463 620,460 633,455 643,451 660,445 677,436 693,422 710,405 727,387 743,368 753,360 763,352 772,350 783,352 793,358 807,374 820,394 833,417 845,439 857,461 868,479 877,492 887,502 900,509 913,511 927,509 940,503 953,492 970,478 987,468 1000,463 1013,460 1027,459 1040,460 1053,465 1067,471 1080,477 1093,479 1120,479 1140,473 1153,466 1173,455 1193,446 1213,440 1233,436 1250,435 1268,434';
const fastLine = '74,470 80,477 85,483 92,487 102,489 109,486 117,481 123,479 133,481 143,485 153,492 165,493 175,492 187,498 200,513 207,527 215,547 223,561 233,575 243,585 253,583 270,583 280,578 290,572 300,564 310,559 327,548 333,543 340,533 348,530 357,524 368,512 377,501 390,486 400,479 410,468 423,461 435,451 447,451 453,456 460,459 473,461 487,467 497,465 508,463 517,463 523,467 532,477 537,480 543,477 552,476 558,473 564,467 573,455 579,448 587,440 597,435 607,429 613,427 623,428 630,425 637,428 650,428 662,422 670,404 676,380 683,353 690,335 697,312 704,291 712,287 718,283 725,297 733,310 740,321 747,333 754,358 762,378 767,402 775,437 783,470 788,487 795,508 803,528 810,537 817,542 823,544 832,541 840,545 850,547 863,543 870,533 878,513 887,494 897,476 907,454 913,445 920,440 928,443 950,441 958,444 967,447 977,455 987,462 995,467 1003,475 1012,477 1020,474 1028,477 1033,482 1042,493 1053,501 1063,513 1068,519 1076,518 1082,502 1089,475 1097,460 1103,444 1110,432 1117,422 1123,420 1130,425 1137,433 1143,438 1153,441 1167,439 1175,434 1350,433';

const dates = [['11-28', 71], ['12-12', 131], ['12-26', 200], ['01-10', 271], ['01-31', 341], ['02-14', 411], ['02-28', 480], ['03-14', 551], ['03-28', 620], ['04-12', 691], ['04-26', 760], ['05-15', 831], ['05-29', 900], ['06-12', 970], ['06-28', 1040], ['07-12', 1111], ['07-26', 1180], ['08-09', 1250], ['08-23', 1321]];

function add(parent, tag, attrs) {
  const el = document.createElementNS(NS, tag);
  for (const key in attrs) el.setAttribute(key, attrs[key]);
  document.getElementById(parent).appendChild(el);
  return el;
}

candles.forEach((item, i) => {
  const x = FIRST + i * STEP;
  const c = item[0];
  const [high, top, bottom, low] = item.slice(1).split(',').map(Number);
  add('candles', 'rect', { x: x, y: high, width: 1, height: low - high, fill: wicks[c] });
  add('candles', 'rect', { x: x - 4, y: top, width: 8, height: bottom - top, fill: fills[c] });
});

volumes.forEach((item, i) => {
  const x = FIRST + i * STEP - 3;
  const top = Number(item.slice(1));
  if (item[0] === 'g') {
    add('volume', 'rect', { x: x, y: top, width: 6, height: BASE - top, fill: '#008000' });
  } else {
    add('volume', 'rect', { x: x + 0.5, y: top + 0.5, width: 5, height: BASE - top - 1, fill: '#fff', stroke: '#c81428' });
  }
});

function curve(points) {
  return 'M' + points.split(' ').map(p => p.split(',').map(n => Number(n) + 0.5).join(' ')).join('L');
}
add('averages', 'path', { d: curve(slowLine), stroke: '#c00018' });
add('averages', 'path', { d: curve(fastLine), stroke: '#007870' });

dates.forEach(([label, x]) => {
  add('dates', 'text', { x: x, y: 138, textLength: label.startsWith('11') ? 20 : 23 }).textContent = label;
});
```
